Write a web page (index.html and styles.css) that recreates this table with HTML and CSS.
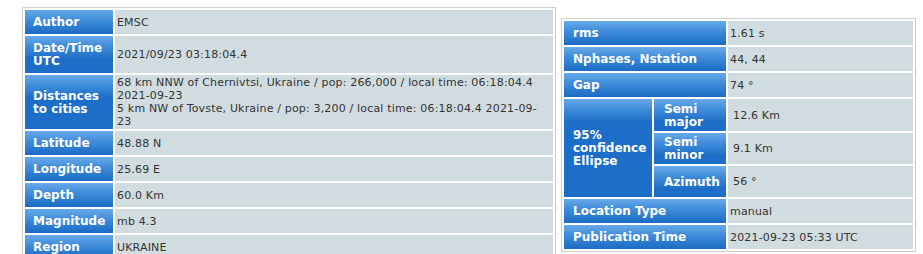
FILE: index.html
```html
<!DOCTYPE html>
<html>
<head>
<meta charset="utf-8">
<link rel="stylesheet" href="styles.css">
</head>
<body>
<div class="page">
  <table class="info info-main">
    <colgroup><col class="c-main-hd"><col class="c-main-val"></colgroup>
    <tr><th class="hd">Author</th><td class="val">EMSC</td></tr>
    <tr><th class="hd">Date/Time UTC</th><td class="val">2021/09/23 03:18:04.4</td></tr>
    <tr><th class="hd">Distances to cities</th><td class="val">68 km NNW of Chernivtsi, Ukraine / pop: 266,000 / local time: 06:18:04.4 2021-09-23<br>5 km NW of Tovste, Ukraine / pop: 3,200 / local time: 06:18:04.4 2021-09-<wbr>23</td></tr>
    <tr><th class="hd">Latitude</th><td class="val">48.88 N</td></tr>
    <tr><th class="hd">Longitude</th><td class="val">25.69 E</td></tr>
    <tr><th class="hd">Depth</th><td class="val">60.0 Km</td></tr>
    <tr><th class="hd">Magnitude</th><td class="val">mb 4.3</td></tr>
    <tr><th class="hd">Region</th><td class="val">UKRAINE</td></tr>
  </table>
  <table class="info info-side">
    <colgroup><col class="c-side-a"><col class="c-side-b"><col class="c-side-val"></colgroup>
    <tr><th class="hd hd-wide" colspan="2">rms</th><td class="val">1.61 s</td></tr>
    <tr><th class="hd hd-wide" colspan="2">Nphases, Nstation</th><td class="val">44, 44</td></tr>
    <tr><th class="hd hd-wide" colspan="2">Gap</th><td class="val">74 °</td></tr>
    <tr class="row-major"><th class="hd hd-ellipse" rowspan="3">95% confidence Ellipse</th><th class="hd hd-sub">Semi major</th><td class="val val-ind">12.6 Km</td></tr>
    <tr class="row-minor"><th class="hd hd-sub">Semi minor</th><td class="val val-ind">9.1 Km</td></tr>
    <tr class="row-az"><th class="hd hd-sub">Azimuth</th><td class="val val-ind">56 °</td></tr>
    <tr><th class="hd hd-wide" colspan="2">Location Type</th><td class="val">manual</td></tr>
    <tr><th class="hd hd-wide" colspan="2">Publication Time</th><td class="val">2021-09-23 05:33 UTC</td></tr>
  </table>
</div>
</body>
</html>
```
FILE: styles.css
```css
html, body {
  margin: 0;
  padding: 0;
  background: #ffffff;
  overflow: hidden;
}
.page {
  display: flex;
  align-items: flex-start;
  gap: 5px;
  padding: 7px 0 0 22px;
  font-family: "DejaVu Sans", Verdana, sans-serif;
}
.info {
  border: 1px solid #cfcfcf;
  border-collapse: separate;
  border-spacing: 2px;
  table-layout: fixed;
  flex: none;
}
.info-main {
  width: 534px;
}
.info-side {
  width: 355px;
  margin-top: 11px;
}
.c-main-hd { width: 88px; }
.c-main-val { width: 438px; }
.c-side-a { width: 88px; }
.c-side-b { width: 72px; }
.c-side-val { width: 185px; }
.hd {
  text-align: left;
  color: #ffffff;
  font-size: 12px;
  font-weight: bold;
  line-height: 13px;
  padding: 6px 8px 5px;
  height: 13px;
  vertical-align: middle;
  background-color: #1c6ec9;
  background-image: linear-gradient(to bottom, #68a9ea 0%, #3d8bd9 45%, #1b6bc5 100%);
  background-size: 100% 24px;
  background-repeat: no-repeat;
}
.val {
  background: #d1dce0;
  color: #333333;
  font-size: 11px;
  letter-spacing: 0.17px;
  line-height: 13px;
  padding: 1px 2px;
  vertical-align: middle;
}
.info-side .hd-wide {
  padding-left: 9px;
}
.hd-ellipse {
  padding: 0 6px 0 9px;
  vertical-align: middle;
}
.hd-sub {
  padding: 3px 6px 2px 10px;
}
.val-ind {
  padding-left: 5px;
}
.row-major .hd-sub { height: 27px; }
.row-minor .hd-sub { height: 26px; }
.row-az .hd-sub { height: 26px; }
```
